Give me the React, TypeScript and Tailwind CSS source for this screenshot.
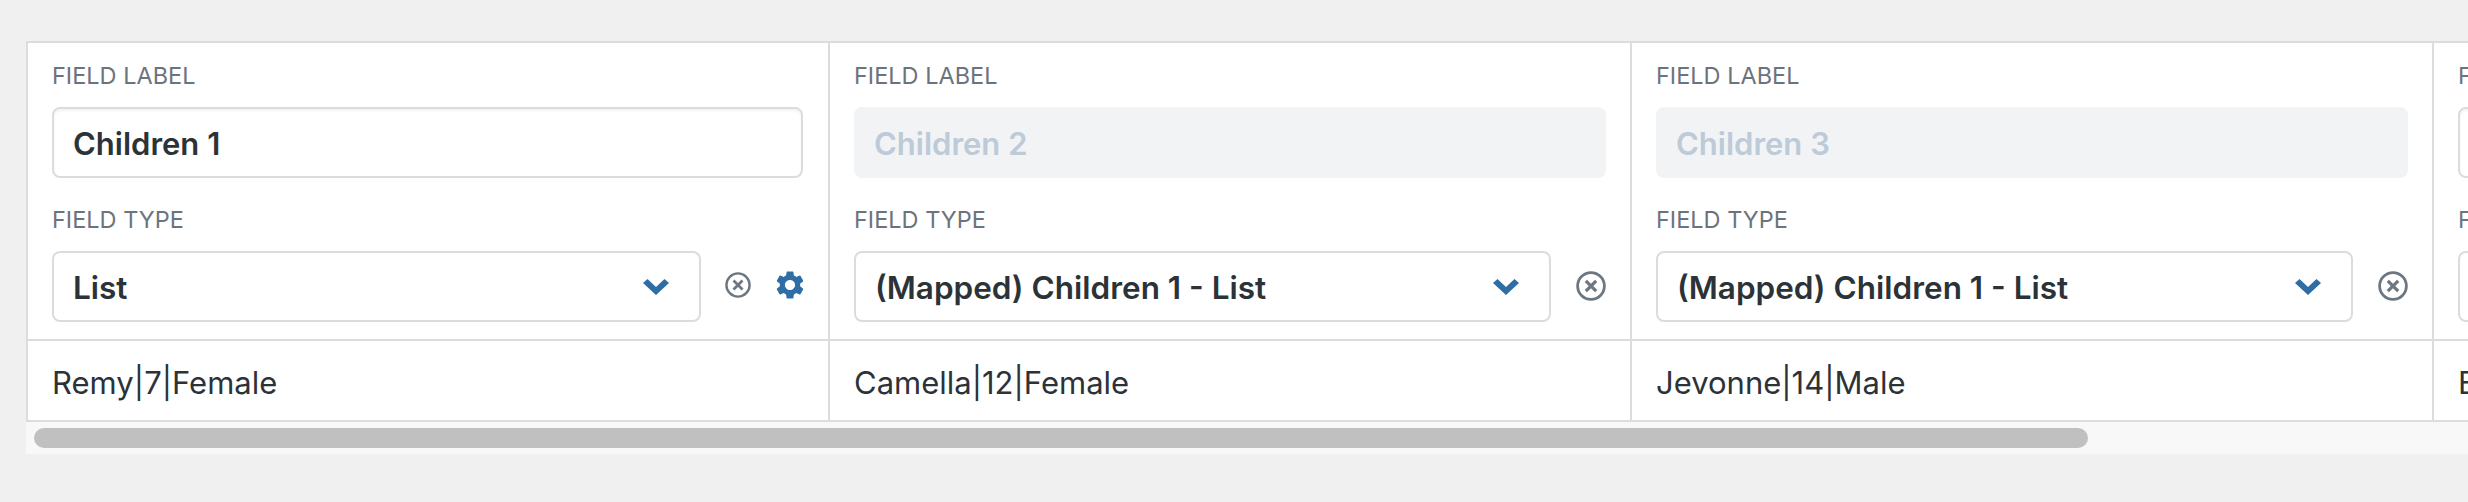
import React from 'react';
import { MdSettings } from 'react-icons/md';

const border = 'border-[#dcdcde]';

// Blue chevron inside the select
const Chevron = () => (
  <svg width="26" height="18" viewBox="0 0 26 18" className="absolute right-[30px] top-[24px]">
    <polygon points="0,6 4.5,2 13,10 21.5,2 26,6 13,18" fill="#2f6ea5" />
  </svg>
);

const ClearIcon = ({ size }: { size: number }) => (
  <svg width={size} height={size} viewBox="0 0 26 26" className="shrink-0" fill="none" stroke="#6c7781">
    <circle cx="13" cy="13" r="11.6" strokeWidth="2.4" />
    <path d="M8.5 8.5l9 9M17.5 8.5l-9 9" strokeWidth="2.8" />
  </svg>
);

interface ColumnProps {
  label: string;
  type: string;
  value: string;
  disabled?: boolean;
  first?: boolean;
}

const Column: React.FC<ColumnProps> = ({ label, type, value, disabled, first }) => (
  <div className={`w-[802px] shrink-0 border-r-2 ${border}`}>
    <div className={`h-[298px] border-b-2 ${border} pl-6 pt-[21px] ${first ? 'pr-[25px]' : 'pr-6'}`}>
      <div className="text-[23.5px] leading-[24px] text-[#6b747c]">FIELD LABEL</div>
      {disabled ? (
        <div className="mt-[19px] h-[71px] rounded-lg bg-[#f2f3f5] pl-[20px] text-[31px] font-semibold leading-[73px] text-[#bdcad7]">
          {label}
        </div>
      ) : (
        <div className={`mt-[19px] h-[71px] rounded-lg border-2 ${border} pl-[19px] text-[31px] font-semibold leading-[69px] text-[#2c3338] shadow-[inset_0_2px_3px_rgba(0,0,0,0.05)]`}>
          {label}
        </div>
      )}
      <div className="mt-[30px] text-[23.5px] leading-[24px] text-[#6b747c]">FIELD TYPE</div>
      <div className="mt-[19px] flex items-center">
        <div className={`relative h-[71px] flex-1 rounded-lg border-2 ${border} pl-[19px] text-[31.5px] font-semibold leading-[69px] text-[#2c3338]`}>
          {type}
          <Chevron />
        </div>
        {first ? (
          <div className="mb-[4px] ml-[24px] -mr-[4px] flex items-center gap-[22px]">
            <ClearIcon size={26} />
            <MdSettings size={34} color="#2f6ea5" />
          </div>
        ) : (
          <div className="mb-[2px] ml-[25px]">
            <ClearIcon size={30} />
          </div>
        )}
      </div>
    </div>
    <div className={`h-[81px] border-b-2 ${border} pl-6 text-[31px] leading-[84px] text-[#2c3338]`}>{value}</div>
  </div>
);

export default function App() {
  return (
    <div className="h-screen overflow-hidden bg-[#f0f0f1] pl-[26px] pt-[41px] font-['Inter',sans-serif]">
      <div className={`flex w-max border-l-2 border-t-2 ${border} bg-white`}>
        <Column first label="Children 1" type="List" value="Remy|7|Female" />
        <Column disabled label="Children 2" type="(Mapped) Children 1 - List" value="Camella|12|Female" />
        <Column disabled label="Children 3" type="(Mapped) Children 1 - List" value="Jevonne|14|Male" />
        <Column label="Children 4" type="(Mapped) Children 1 - List" value="Ellis|9|Male" />
      </div>
      {/* Scrollbar */}
      <div className="h-[32px] bg-[#f8f8f8] pl-2 pt-[6px]">
        <div className="h-5 w-[2054px] rounded-full bg-[#c0c0c0]" />
      </div>
    </div>
  );
}
